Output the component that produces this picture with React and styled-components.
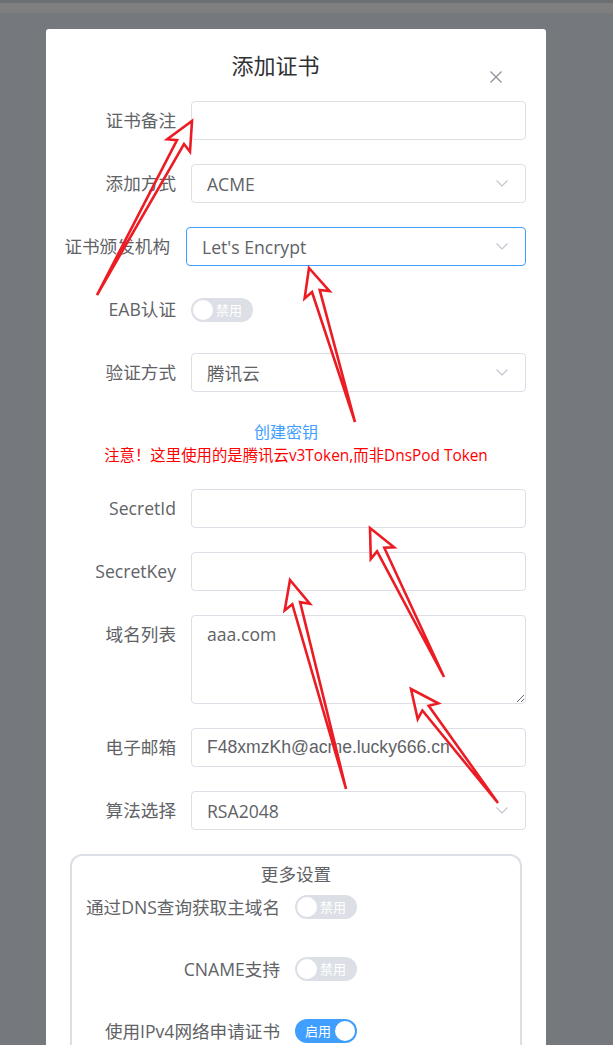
import React from "react";
import styled, { createGlobalStyle } from "styled-components";

const GlobalStyle = createGlobalStyle`
  html, body {
    margin: 0;
    padding: 0;
  }
  body {
    width: 613px;
    height: 1045px;
    overflow: hidden;
    background: #75787d;
    font-family: "Open Sans", "Noto Sans CJK SC", sans-serif;
  }
`;

const Screen = styled.div`
  position: relative;
  height: 1045px;
  overflow: hidden;
  background: #75787d;
`;

const TopStrip = styled.div`
  height: 13px;
  box-sizing: border-box;
  background: #7f7f7f;
  border-top: 3px solid #6b6f74;
`;

const Dialog = styled.div`
  position: relative;
  width: 500px;
  margin: 16px 0 0 46px;
  background: #fff;
  border-radius: 3px;
  padding-bottom: 40px;
`;

const Header = styled.div`
  padding: 21px 61px 0 20px;
  text-align: center;
  font-size: 22px;
  line-height: 30px;
  color: #303133;
`;

const CloseButton = styled.span`
  position: absolute;
  top: 42px;
  right: 44px;
  width: 12px;
  height: 12px;
  display: flex;
  color: #909399;
`;

const Form = styled.div`
  padding: 21px 20px 0 20px;
`;

const FormItem = styled.div`
  display: flex;
  align-items: ${(p) => (p.$top ? "flex-start" : "center")};
  min-height: 39px;
  margin-bottom: ${(p) => p.$gap ?? 24}px;
`;

const Label = styled.div`
  width: ${(p) => p.$width ?? 125}px;
  padding-right: ${(p) => p.$pad ?? 15}px;
  box-sizing: border-box;
  flex-shrink: 0;
  display: flex;
  justify-content: flex-end;
  white-space: nowrap;
  font-size: 17.6px;
  line-height: 39px;
  color: #606266;
`;

const TextInput = styled.input`
  flex: 1;
  min-width: 0;
  height: 39px;
  box-sizing: border-box;
  padding: 0 15px;
  border: 1px solid #dcdfe6;
  border-radius: 4px;
  outline: none;
  background: #fff;
  font-family: ${(p) =>
    p.$arial
      ? `"Liberation Sans", "Noto Sans CJK SC", sans-serif`
      : `"Open Sans", "Noto Sans CJK SC", sans-serif`};
  font-size: 17.6px;
  color: #606266;
`;

const Select = styled.div`
  flex: 1;
  height: 39px;
  box-sizing: border-box;
  padding: 0 17px 0 15px;
  display: flex;
  align-items: center;
  justify-content: space-between;
  border: 1px solid ${(p) => (p.$focus ? "#409eff" : "#dcdfe6")};
  border-radius: 4px;
  font-size: 17.6px;
  color: #606266;
`;

const TextArea = styled.textarea`
  flex: 1;
  height: 89px;
  box-sizing: border-box;
  padding: 5px 15px;
  border: 1px solid #dcdfe6;
  border-radius: 4px;
  outline: none;
  resize: vertical;
  font-family: "Open Sans", "Noto Sans CJK SC", sans-serif;
  font-size: 17.6px;
  line-height: 1.5;
  color: #606266;
`;

const Switch = styled.div`
  width: 62px;
  height: 24px;
  box-sizing: border-box;
  padding: 0 2px;
  border-radius: 12px;
  display: flex;
  flex-direction: ${(p) => (p.$on ? "row-reverse" : "row")};
  align-items: center;
  gap: ${(p) => (p.$on ? 4 : 3)}px;
  background: ${(p) => (p.$on ? "#409eff" : "#dcdfe6")};
`;

const Knob = styled.span`
  width: 20px;
  height: 20px;
  flex-shrink: 0;
  border-radius: 50%;
  background: #fff;
`;

const SwitchText = styled.span`
  flex: 1;
  display: flex;
  justify-content: ${(p) => (p.$on ? "flex-end" : "flex-start")};
  font-family: "Noto Sans CJK SC", sans-serif;
  font-size: 13px;
  line-height: 24px;
  color: #fff;
`;

const Notes = styled.div`
  padding-top: 4px;
  margin-bottom: 21px;
  text-align: center;
`;

const KeyLink = styled.div`
  padding-right: 20px;
  font-size: 16px;
  line-height: 24px;
  color: #409eff;
`;

const Warning = styled.div`
  margin: 0 -20px;
  font-size: 15.4px;
  line-height: 24px;
  color: #ff0000;
  white-space: nowrap;
`;

const MoreBox = styled.div`
  margin: 0 4px;
  padding-top: 5px;
  border: 2px solid #dcdfe6;
  border-radius: 12px;
`;

const MoreTitle = styled.div`
  text-align: center;
  font-size: 17.6px;
  line-height: 26px;
  color: #606266;
`;

const MoreRow = styled.div`
  display: flex;
  align-items: center;
  height: 40px;
  margin-bottom: 22px;
`;

const Overlay = styled.svg`
  position: absolute;
  top: 0;
  left: 0;
  pointer-events: none;
`;

const Chevron = () => (
  <svg width="12" height="7" viewBox="0 0 12 7" fill="none">
    <path d="M0.5 0.5L6 6L11.5 0.5" stroke="#c0c4cc" strokeWidth="1.1" />
  </svg>
);

const Toggle = ({ on }) => (
  <Switch $on={on}>
    <Knob />
    <SwitchText $on={on}>{on ? "启用" : "禁用"}</SwitchText>
  </Switch>
);

// hand-drawn red outline arrows: [tailX, tailY, tipX, tipY]
const arrows = [
  [97, 295, 192, 121],
  [355, 422, 309, 268],
  [444, 677, 370, 528],
  [346, 789, 290, 580],
  [498, 803, 411, 689],
];

const arrowPoints = ([tx, ty, px, py]) => {
  const len = Math.hypot(px - tx, py - ty);
  const ux = (px - tx) / len;
  const uy = (py - ty) / len;
  const nx = -uy;
  const ny = ux;
  const at = (back, side) =>
    `${(px - ux * back + nx * side).toFixed(1)},${(py - uy * back + ny * side).toFixed(1)}`;
  return [
    `${px},${py}`,
    at(28, 13),
    at(24, 4),
    `${tx},${ty}`,
    at(24, -4),
    at(28, -13),
  ].join(" ");
};

const App = () => {
  return (
    <Screen>
      <GlobalStyle />
      <TopStrip />
      <Dialog>
        <Header>添加证书</Header>
        <CloseButton>
          <svg width="12" height="12" viewBox="0 0 12 12">
            <path d="M0.5 0.5L11.5 11.5M11.5 0.5L0.5 11.5" stroke="currentColor" strokeWidth="1.3" />
          </svg>
        </CloseButton>

        <Form>
          <FormItem>
            <Label>证书备注</Label>
            <TextInput defaultValue="" />
          </FormItem>
          <FormItem>
            <Label>添加方式</Label>
            <Select>
              ACME
              <Chevron />
            </Select>
          </FormItem>
          <FormItem>
            <Label $width={120} $pad={16}>
              证书颁发机构
            </Label>
            <Select $focus>
              Let's Encrypt
              <Chevron />
            </Select>
          </FormItem>
          <FormItem>
            <Label>EAB认证</Label>
            <Toggle on={false} />
          </FormItem>
          <FormItem>
            <Label>验证方式</Label>
            <Select>
              腾讯云
              <Chevron />
            </Select>
          </FormItem>

          <Notes>
            <KeyLink>创建密钥</KeyLink>
            <Warning>注意！这里使用的是腾讯云v3Token,而非DnsPod Token</Warning>
          </Notes>

          <FormItem>
            <Label>SecretId</Label>
            <TextInput defaultValue="" />
          </FormItem>
          <FormItem>
            <Label>SecretKey</Label>
            <TextInput defaultValue="" />
          </FormItem>
          <FormItem $top>
            <Label>域名列表</Label>
            <TextArea defaultValue="aaa.com" />
          </FormItem>
          <FormItem>
            <Label>电子邮箱</Label>
            <TextInput $arial defaultValue="F48xmzKh@acme.lucky666.cn" />
          </FormItem>
          <FormItem>
            <Label>算法选择</Label>
            <Select>
              RSA2048
              <Chevron />
            </Select>
          </FormItem>

          <MoreBox>
            <MoreTitle>更多设置</MoreTitle>
            <MoreRow>
              <Label $width={223}>通过DNS查询获取主域名</Label>
              <Toggle on={false} />
            </MoreRow>
            <MoreRow>
              <Label $width={223}>CNAME支持</Label>
              <Toggle on={false} />
            </MoreRow>
            <MoreRow>
              <Label $width={223}>使用IPv4网络申请证书</Label>
              <Toggle on />
            </MoreRow>
          </MoreBox>
        </Form>
      </Dialog>

      <Overlay width="613" height="1045" viewBox="0 0 613 1045">
        {arrows.map((a, i) => (
          <polygon
            key={i}
            points={arrowPoints(a)}
            fill="none"
            stroke="#ec1c24"
            strokeWidth="2.6"
            strokeLinejoin="miter"
          />
        ))}
      </Overlay>
    </Screen>
  );
};

export default App;
